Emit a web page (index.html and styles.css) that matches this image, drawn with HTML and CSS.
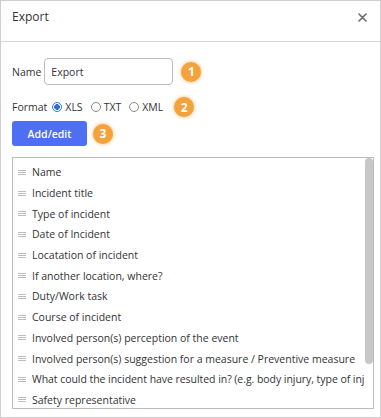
FILE: index.html
```html
<!DOCTYPE html>
<html>
<head>
<meta charset="utf-8">
<link rel="stylesheet" href="styles.css">
</head>
<body>
<div class="dialog">
  <div class="header">
    <span class="title">Export</span>
    <svg class="close" width="9" height="9" viewBox="0 0 9 9"><path d="M1 1L8 8M8 1L1 8" stroke="#6b6b6b" stroke-width="1.6" stroke-linecap="round"/></svg>
  </div>
  <div class="content">
    <div class="row name-row">
      <span class="label">Name</span>
      <div class="input">Export</div>
      <span class="badge b1">1</span>
    </div>
    <div class="row format-row">
      <span class="label">Format</span>
      <span class="radio checked"></span><span class="opt">XLS</span>
      <span class="radio"></span><span class="opt">TXT</span>
      <span class="radio"></span><span class="opt">XML</span>
      <span class="badge b2">2</span>
    </div>
    <div class="row btn-row">
      <div class="button">Add/edit</div>
      <span class="badge b3">3</span>
    </div>
    <div class="list">
      <div class="items">
        <div class="item"><span class="grip"></span><span>Name</span></div>
        <div class="item"><span class="grip"></span><span>Incident title</span></div>
        <div class="item"><span class="grip"></span><span>Type of incident</span></div>
        <div class="item"><span class="grip"></span><span>Date of Incident</span></div>
        <div class="item"><span class="grip"></span><span>Locatation of incident</span></div>
        <div class="item"><span class="grip"></span><span>If another location, where?</span></div>
        <div class="item"><span class="grip"></span><span>Duty/Work task</span></div>
        <div class="item"><span class="grip"></span><span>Course of incident</span></div>
        <div class="item"><span class="grip"></span><span>Involved person(s) perception of the event</span></div>
        <div class="item"><span class="grip"></span><span>Involved person(s) suggestion for a measure / Preventive measure</span></div>
        <div class="item"><span class="grip"></span><span class="long">What could the incident have resulted in? (e.g. body injury, type of inj</span></div>
        <div class="item"><span class="grip"></span><span>Safety representative</span></div>
      </div>
      <div class="track"><div class="thumb"></div></div>
    </div>
  </div>
</div>
</body>
</html>
```
FILE: styles.css
```css
* { box-sizing: border-box; }
html, body { margin: 0; padding: 0; background: #fff; }
body { font-family: "Open Sans", "Liberation Sans", sans-serif; color: #333; font-size: 10.5px; }
.dialog {
  width: 381px; height: 418px;
  border: 1px solid #cfcfcf;
  display: flex; flex-direction: column;
  overflow: hidden;
}
.header {
  height: 41px;
  border-bottom: 1px solid #d4d4d4;
  display: flex; align-items: flex-start; justify-content: space-between;
  padding: 6px 13px 0 11px;
}
.title { font-size: 12px; line-height: 19px; color: #333; }
.close { margin-top: 6px; }
.content { padding: 0 6px 0 11px; display: flex; flex-direction: column; }
.row { display: flex; align-items: center; }
.name-row { margin-top: 16px; height: 27px; }
.label { line-height: 14px; }
.input {
  margin-left: 3px;
  width: 129px; height: 27px;
  border: 1px solid #bdbdbd; border-radius: 4px;
  padding: 0 6px;
  display: flex; align-items: center;
}
.badge {
  width: 20px; height: 20px; border-radius: 50%;
  background: #f3a23c;
  box-shadow: 0 0 3px 1px rgba(243, 162, 60, 0.45);
  color: #fff; font-weight: 700; font-size: 12px;
  display: flex; align-items: center; justify-content: center;
}
.b1 { margin-left: 8px; }
.format-row { margin-top: 15px; height: 14px; }
.radio {
  width: 10px; height: 10px; border-radius: 50%;
  border: 1px solid #8a8a8a; background: #fff;
  margin-left: 8px; margin-right: 3px;
}
.label + .radio { margin-left: 5px; }
.radio.checked {
  border-color: #3a7bd5;
  background: radial-gradient(circle, #2f6fd6 0 2.6px, #fff 3.1px);
}
.b2 { margin-left: 11px; }
.btn-row { margin-top: 7px; }
.button {
  width: 75px; height: 25px; border-radius: 3px;
  background: #4e6ef5; color: #fff; font-weight: 600;
  display: flex; align-items: center; justify-content: center;
}
.b3 { margin-left: 6px; }
.list {
  margin-top: 11px;
  height: 252px;
  border: 1px solid #bcbcbc;
  display: flex;
  overflow: hidden;
}
.items { flex: 1; min-width: 0; overflow: hidden; padding-top: 4px; }
.item {
  height: 20.7px; display: flex; align-items: center;
  white-space: nowrap; padding-left: 5px;
}
.long { letter-spacing: -0.05px; }
.grip {
  flex: none;
  width: 8px; height: 5px; margin-right: 6px;
  background: linear-gradient(#bdbdbd 0 1px, transparent 1px 2px, #bdbdbd 2px 3px, transparent 3px 4px, #bdbdbd 4px 5px);
}
.track { width: 8px; flex: none; }
.thumb { width: 8px; height: 206px; border-radius: 4px; background: #c7c7c7; }
```
